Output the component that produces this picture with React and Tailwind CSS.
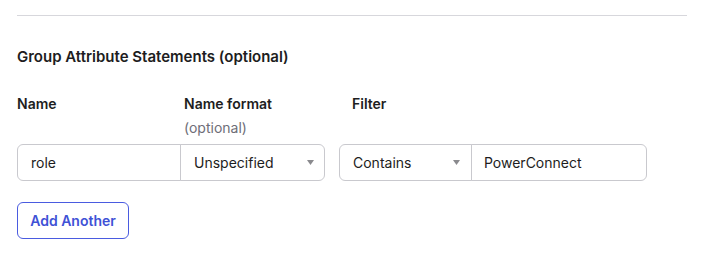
const Caret = () => (
  <svg width="7" height="5" viewBox="0 0 7 5" className="shrink-0">
    <path d="M0 0h7L3.5 5z" fill="#8a8a8e" />
  </svg>
);

export default function App() {
  return (
    <div className="w-[701px] h-[260px] bg-white text-[#1d1d21] font-['Inter','Liberation_Sans',sans-serif] px-[17px] pt-[15px]">
      <div className="w-[670px] border-t border-[#d7d7dc]" />

      <h2 className="mt-[31px] text-[15px] leading-[20px] font-semibold">
        Group Attribute Statements (optional)
      </h2>

      {/* column headers */}
      <div className="mt-[27px] flex text-[14px] leading-[20px] font-semibold">
        <div className="w-[163px]">Name</div>
        <div className="w-[159px] pl-[4px]">
          <div>Name format</div>
          <div className="mt-[4px] text-[14px] leading-[20px] font-normal text-[#6e6e78]">
            (optional)
          </div>
        </div>
        <div className="pl-[13px]">Filter</div>
      </div>

      {/* inputs */}
      <div className="mt-[6px] flex text-[14px]">
        <div className="w-[164px] h-[37px] flex items-center px-[13px] border border-[#c9c9ce] rounded-l-[6px]">
          role
        </div>
        <div className="-ml-px w-[145px] h-[37px] flex items-center justify-between pl-[13px] pr-[10px] border border-[#c9c9ce] rounded-r-[6px]">
          <span>Unspecified</span>
          <Caret />
        </div>
        <div className="ml-[14px] w-[133px] h-[37px] flex items-center justify-between pl-[13px] pr-[11px] border border-[#c9c9ce] rounded-l-[6px]">
          <span>Contains</span>
          <Caret />
        </div>
        <div className="-ml-px w-[176px] h-[37px] flex items-center px-[12px] border border-[#c9c9ce] rounded-r-[6px]">
          PowerConnect
        </div>
      </div>

      <button className="mt-[21px] w-[112px] h-[37px] border border-[#4a5be0] rounded-[6px] text-[14px] font-semibold text-[#3f52d6] bg-white">
        Add Another
      </button>
    </div>
  );
}
